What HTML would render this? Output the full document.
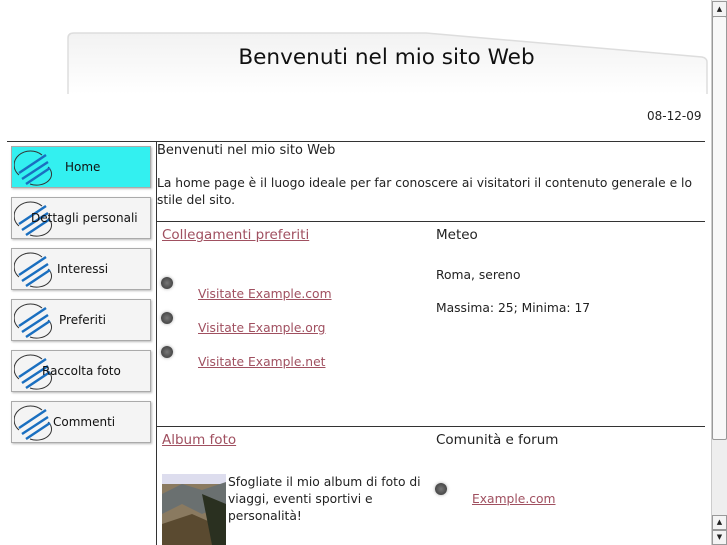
<!DOCTYPE html>
<html><head><meta charset="utf-8"><style>
body{margin:0;width:727px;height:545px;overflow:hidden;background:#fff;font-family:"DejaVu Sans","Liberation Sans",sans-serif;font-size:12.3px;color:#222;position:relative}
.a{position:absolute;white-space:nowrap}
a{color:#a05060;text-decoration:underline}
.btn{position:absolute;left:11px;width:138px;height:40px;border:1px solid #aaa;background:#f4f4f4;box-shadow:1px 1px 2px #bbb}
.btn span{position:absolute;top:13px;font-size:12px;color:#111}
.btn svg{position:absolute;left:2px;top:2px}
.dot{position:absolute;width:12px;height:12px;border-radius:50%;background:radial-gradient(circle,#777,#333);box-shadow:0 0 3px #aaa}
</style></head><body>
<svg class="a" style="left:66px;top:30px" width="648" height="64"><defs><linearGradient id="g" x1="0" y1="0" x2="0" y2="1"><stop offset="0" stop-color="#f2f2f2"/><stop offset="1" stop-color="#fff"/></linearGradient></defs>
<path d="M2 64 V8 Q2 3 8 3 H360 L636 27 Q641 28 641 32 V64" fill="url(#g)" stroke="#ddd" stroke-width="1.5"/></svg>
<div class="a" style="left:0;width:773px;text-align:center;top:45px;font-size:21.6px;color:#111">Benvenuti nel mio sito Web</div>
<div class="a" style="left:647px;top:109px;font-size:12px">08-12-09</div>
<div class="a" style="left:7px;top:141px;width:698px;border-top:1px solid #333"></div>
<div class="a" style="left:156px;top:141px;height:404px;border-left:1px solid #333"></div>
<div class="a" style="left:156px;top:221px;width:549px;border-top:1px solid #333"></div>
<div class="a" style="left:156px;top:426px;width:549px;border-top:1px solid #333"></div>
<div class="btn" style="top:146px;background:#33f0f0"><svg width="40" height="38"><path d="M5 26 A14 12 0 0 1 28 6 M16 35 A15 11 0 0 0 34 18" stroke="#333" fill="none"/><path d="M5 24 L32 6 M8 30 L34 13 M12 35 L36 19" stroke="#1a6fc0" stroke-width="2.5"/></svg><span style="left:53px">Home</span></div>
<div class="btn" style="top:197px"><svg width="40" height="38"><path d="M5 26 A14 12 0 0 1 28 6 M16 35 A15 11 0 0 0 34 18" stroke="#333" fill="none"/><path d="M5 24 L32 6 M8 30 L34 13 M12 35 L36 19" stroke="#1a6fc0" stroke-width="2.5"/></svg><span style="left:19px">Dettagli personali</span></div>
<div class="btn" style="top:248px"><svg width="40" height="38"><path d="M5 26 A14 12 0 0 1 28 6 M16 35 A15 11 0 0 0 34 18" stroke="#333" fill="none"/><path d="M5 24 L32 6 M8 30 L34 13 M12 35 L36 19" stroke="#1a6fc0" stroke-width="2.5"/></svg><span style="left:45px">Interessi</span></div>
<div class="btn" style="top:299px"><svg width="40" height="38"><path d="M5 26 A14 12 0 0 1 28 6 M16 35 A15 11 0 0 0 34 18" stroke="#333" fill="none"/><path d="M5 24 L32 6 M8 30 L34 13 M12 35 L36 19" stroke="#1a6fc0" stroke-width="2.5"/></svg><span style="left:47px">Preferiti</span></div>
<div class="btn" style="top:350px"><svg width="40" height="38"><path d="M5 26 A14 12 0 0 1 28 6 M16 35 A15 11 0 0 0 34 18" stroke="#333" fill="none"/><path d="M5 24 L32 6 M8 30 L34 13 M12 35 L36 19" stroke="#1a6fc0" stroke-width="2.5"/></svg><span style="left:30px">Raccolta foto</span></div>
<div class="btn" style="top:401px"><svg width="40" height="38"><path d="M5 26 A14 12 0 0 1 28 6 M16 35 A15 11 0 0 0 34 18" stroke="#333" fill="none"/><path d="M5 24 L32 6 M8 30 L34 13 M12 35 L36 19" stroke="#1a6fc0" stroke-width="2.5"/></svg><span style="left:41px">Commenti</span></div>
<div class="a" style="left:157px;top:143px;font-size:13px">Benvenuti nel mio sito Web</div>
<div class="a" style="left:157px;top:175px;line-height:17px;white-space:normal;width:548px">La home page è il luogo ideale per far conoscere ai visitatori il contenuto generale e lo stile del sito.</div>
<div class="a" style="left:162px;top:227px;font-size:13.5px"><a>Collegamenti preferiti</a></div>
<div class="a" style="left:436px;top:227px;font-size:13.5px">Meteo</div>
<div class="dot" style="left:161px;top:277px"></div><div class="dot" style="left:161px;top:312px"></div><div class="dot" style="left:161px;top:346px"></div>
<div class="a" style="left:198px;top:287px"><a>Visitate Example.com</a></div>
<div class="a" style="left:198px;top:321px"><a>Visitate Example.org</a></div>
<div class="a" style="left:198px;top:355px"><a>Visitate Example.net</a></div>
<div class="a" style="left:436px;top:268px">Roma, sereno</div>
<div class="a" style="left:436px;top:301px">Massima: 25; Minima: 17</div>
<div class="a" style="left:162px;top:432px;font-size:13.5px"><a>Album foto</a></div>
<div class="a" style="left:436px;top:432px;font-size:13.5px">Comunità e forum</div>
<svg class="a" style="left:162px;top:474px" width="64" height="71"><rect width="64" height="71" fill="#8a7a60"/><rect width="64" height="10" fill="#dde"/><path d="M0 20 L20 10 L40 16 L64 8 V30 L40 40 L20 30 L0 40Z" fill="#6a7070"/><path d="M0 50 L30 40 L64 55 V71 H0Z" fill="#5a4a30"/><path d="M40 20 L64 30 V71 H50Z" fill="#2a3020"/></svg>
<div class="a" style="left:228px;top:474px;line-height:17px;white-space:normal;width:200px">Sfogliate il mio album di foto di viaggi, eventi sportivi e personalità!</div>
<div class="dot" style="left:435px;top:483px"></div>
<div class="a" style="left:472px;top:492px"><a>Example.com</a></div>
<div class="a" style="left:711px;top:0;width:16px;height:545px;background:#eee;border-left:1px solid #ccc"></div>
<div class="a" style="left:712px;top:1px;width:13px;height:14px;background:#f4f4f4;border:1px solid #999;font-size:7px;text-align:center;line-height:14px">▲</div>
<div class="a" style="left:712px;top:16px;width:13px;height:422px;background:#f8f8f8;border:1px solid #999;border-radius:2px"></div>
<div class="a" style="left:712px;top:515px;width:13px;height:13px;background:#f4f4f4;border:1px solid #999;font-size:7px;text-align:center;line-height:13px">▲</div>
<div class="a" style="left:712px;top:530px;width:13px;height:13px;background:#f4f4f4;border:1px solid #999;font-size:7px;text-align:center;line-height:13px">▼</div>
</body></html>
